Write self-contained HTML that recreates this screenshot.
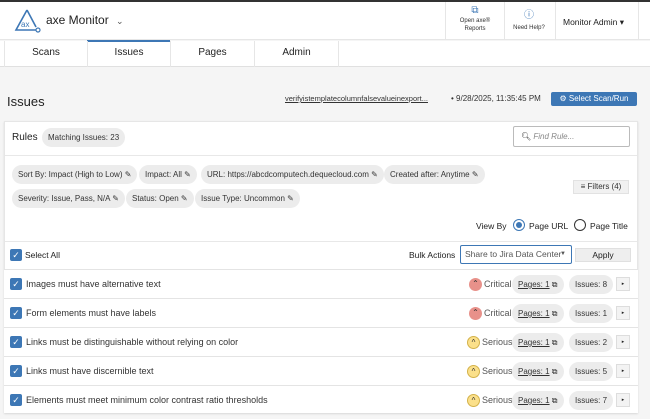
<!DOCTYPE html>
<html><head><style>
*{box-sizing:border-box;margin:0;padding:0}
body{width:650px;height:419px;overflow:hidden;background:#f5f5f5;font-family:"Liberation Sans",sans-serif;color:#222;position:relative;font-size:9px}
.a{position:absolute;white-space:nowrap}
.pill{position:absolute;background:#ececec;border-radius:12px;height:19px;line-height:19px;padding:0 6px;font-size:8px;color:#333;white-space:nowrap}
.row{position:absolute;left:4px;width:634px;height:29px;border-top:1px solid #e4e4e4;background:#fff}
.cb{position:absolute;left:6px;top:8px;width:12px;height:12px;background:#3d77b5;border-radius:2px;color:#fff;font-size:9px;line-height:12px;text-align:center}
.rt{position:absolute;left:22px;top:9px;font-size:9px;color:#333;white-space:nowrap}
.ic{position:absolute;width:13px;height:13px;border-radius:50%;top:8px;font-size:8px;line-height:12px;text-align:center;color:#333}
.sev{position:absolute;top:9px;font-size:9px;color:#555}
.btn{position:absolute;right:8px;top:7px;width:14px;height:14px;border:1px solid #ddd;background:#f3f3f3;font-size:5px;line-height:12px;text-align:center}
</style></head><body>
<div class="a" style="left:0;top:0;width:650px;height:2px;background:#333"></div>
<div class="a" style="left:0;top:2px;width:650px;height:38px;background:#fff;border-bottom:1px solid #e6e6e6"></div>
<svg class="a" style="left:14px;top:8px" width="28" height="26" viewBox="0 0 28 26"><path d="M13 2 L2 22 H23" fill="none" stroke="#3d77b5" stroke-width="1.6"/><path d="M13 2 L22 19" fill="none" stroke="#3d77b5" stroke-width="1.6"/><circle cx="24" cy="22" r="2" fill="#fff" stroke="#3d77b5" stroke-width="1.2"/><text x="7" y="19" font-size="8" fill="#3d77b5" font-family="Liberation Sans">ax</text></svg>
<div class="a" style="left:46px;top:13px;font-size:12px;color:#222">axe Monitor <span style="font-size:9px;color:#555;margin-left:4px">⌄</span></div>
<div class="a" style="left:445px;top:2px;width:1px;height:38px;background:#e6e6e6"></div>
<div class="a" style="left:504px;top:2px;width:1px;height:38px;background:#e6e6e6"></div>
<div class="a" style="left:555px;top:2px;width:1px;height:38px;background:#e6e6e6"></div>
<div class="a" style="left:638px;top:2px;width:1px;height:38px;background:#e6e6e6"></div>
<div class="a" style="left:450px;top:7px;width:50px;text-align:center;font-size:6px;line-height:8.5px;color:#333"><span style="color:#3d77b5;font-size:10px">⧉</span><br>Open axe®<br>Reports</div>
<div class="a" style="left:506px;top:10px;width:46px;text-align:center;font-size:6px;line-height:11px;color:#333"><span style="color:#3d77b5;font-size:10px">ⓘ</span><br>Need Help?</div>
<div class="a" style="left:563px;top:17px;font-size:8.5px;color:#222">Monitor Admin ▾</div>
<div class="a" style="left:0;top:41px;width:650px;height:26px;background:#fff;border-bottom:1px solid #e0e0e0"></div>
<div class="a" style="left:4px;top:41px;width:1px;height:26px;background:#e6e6e6"></div>
<div class="a" style="left:87px;top:40px;width:83px;height:2px;background:#3d77b5"></div>
<div class="a" style="left:87px;top:41px;width:1px;height:26px;background:#e6e6e6"></div>
<div class="a" style="left:170px;top:41px;width:1px;height:26px;background:#e6e6e6"></div>
<div class="a" style="left:254px;top:41px;width:1px;height:26px;background:#e6e6e6"></div>
<div class="a" style="left:338px;top:41px;width:1px;height:26px;background:#e6e6e6"></div>
<div class="a" style="left:5px;top:47px;width:82px;text-align:center;font-size:10px">Scans</div>
<div class="a" style="left:88px;top:47px;width:82px;text-align:center;font-size:10px">Issues</div>
<div class="a" style="left:171px;top:47px;width:83px;text-align:center;font-size:10px">Pages</div>
<div class="a" style="left:255px;top:47px;width:83px;text-align:center;font-size:10px">Admin</div>
<div class="a" style="left:7px;top:94px;font-size:13px;color:#222">Issues</div>
<div class="a" style="left:285px;top:94px;font-size:7.5px;color:#333;text-decoration:underline">verifyistemplatecolumnfalsevalueinexport...</div>
<div class="a" style="left:451px;top:94px;font-size:8px;color:#333">• 9/28/2025, 11:35:45 PM</div>
<div class="a" style="left:551px;top:92px;width:86px;height:14px;background:#3d77b5;border-radius:2px;color:#fff;font-size:8px;line-height:14px;text-align:center">⚙ Select Scan/Run</div>
<div class="a" style="left:4px;top:121px;width:634px;height:292px;background:#fff;border:1px solid #e6e6e6;box-shadow:0 1px 2px rgba(0,0,0,.12)"></div>
<div class="a" style="left:12px;top:132px;font-size:10px">Rules</div>
<div class="pill" style="left:42px;top:128px">Matching Issues: 23</div>
<div class="a" style="left:513px;top:126px;width:117px;height:21px;border:1px solid #bbb;border-radius:2px;font-size:8px;color:#888;line-height:19px;padding-left:7px"><span style="color:#333">🔍︎</span> <i>Find Rule...</i></div>
<div class="a" style="left:5px;top:155px;width:632px;height:1px;background:#e8e8e8"></div>
<div class="pill" style="left:12px;top:165px">Sort By: Impact (High to Low) ✎</div>
<div class="pill" style="left:139px;top:165px">Impact: All ✎</div>
<div class="pill" style="left:201px;top:165px">URL: https://abcdcomputech.dequecloud.com ✎</div>
<div class="pill" style="left:384px;top:165px">Created after: Anytime ✎</div>
<div class="pill" style="left:12px;top:189px">Severity: Issue, Pass, N/A ✎</div>
<div class="pill" style="left:126px;top:189px">Status: Open ✎</div>
<div class="pill" style="left:195px;top:189px">Issue Type: Uncommon ✎</div>
<div class="a" style="left:573px;top:180px;width:56px;height:14px;background:#f1f1f1;border:1px solid #e2e2e2;font-size:8px;line-height:12px;text-align:center;color:#333">≡ Filters (4)</div>
<div class="a" style="left:476px;top:221px;font-size:8.5px">View By</div>
<div class="a" style="left:513px;top:219px;width:12px;height:12px;border:1px solid #3d77b5;border-radius:50%"><div style="margin:2px;width:6px;height:6px;border-radius:50%;background:#3d77b5"></div></div>
<div class="a" style="left:529px;top:221px;font-size:8.5px">Page URL</div>
<div class="a" style="left:574px;top:219px;width:12px;height:12px;border:1px solid #333;border-radius:50%"></div>
<div class="a" style="left:590px;top:221px;font-size:8.5px">Page Title</div>
<div class="a" style="left:5px;top:241px;width:632px;height:1px;background:#e8e8e8"></div>
<div class="cb" style="top:249px;left:10px">✓</div>
<div class="a" style="left:25px;top:250px;font-size:8.5px">Select All</div>
<div class="a" style="left:409px;top:250px;font-size:8.5px">Bulk Actions</div>
<div class="a" style="left:460px;top:245px;width:112px;height:19px;border:1px solid #3d77b5;border-radius:2px;font-size:8.5px;line-height:17px;padding-left:4px;color:#555;overflow:hidden">Share to Jira Data Center<span style="position:absolute;right:5px;font-size:6px">▼</span></div>
<div class="a" style="left:575px;top:248px;width:56px;height:14px;background:#eee;border:1px solid #e0e0e0;font-size:8.5px;line-height:12px;text-align:center">Apply</div>

<div class="row" style="top:269px"><div class="cb">✓</div><div class="rt">Images must have alternative text</div><div class="ic" style="left:465px;background:#e8918a">⌃</div><div class="sev" style="left:480px">Critical</div><div class="pill" style="left:508px;top:5px;color:#333"><u>Pages: 1</u> ⧉</div><div class="pill" style="left:565px;top:5px">Issues: 8</div><div class="btn">▸</div></div>
<div class="row" style="top:298px"><div class="cb">✓</div><div class="rt">Form elements must have labels</div><div class="ic" style="left:465px;background:#e8918a">⌃</div><div class="sev" style="left:480px">Critical</div><div class="pill" style="left:508px;top:5px"><u>Pages: 1</u> ⧉</div><div class="pill" style="left:565px;top:5px">Issues: 1</div><div class="btn">▸</div></div>
<div class="row" style="top:327px"><div class="cb">✓</div><div class="rt">Links must be distinguishable without relying on color</div><div class="ic" style="left:463px;background:#fbe08a;border:1px solid #d4b24a">^</div><div class="sev" style="left:478px">Serious</div><div class="pill" style="left:508px;top:5px"><u>Pages: 1</u> ⧉</div><div class="pill" style="left:565px;top:5px">Issues: 2</div><div class="btn">▸</div></div>
<div class="row" style="top:356px"><div class="cb">✓</div><div class="rt">Links must have discernible text</div><div class="ic" style="left:463px;background:#fbe08a;border:1px solid #d4b24a">^</div><div class="sev" style="left:478px">Serious</div><div class="pill" style="left:508px;top:5px"><u>Pages: 1</u> ⧉</div><div class="pill" style="left:565px;top:5px">Issues: 5</div><div class="btn">▸</div></div>
<div class="row" style="top:385px;height:28px"><div class="cb">✓</div><div class="rt">Elements must meet minimum color contrast ratio thresholds</div><div class="ic" style="left:463px;background:#fbe08a;border:1px solid #d4b24a">^</div><div class="sev" style="left:478px">Serious</div><div class="pill" style="left:508px;top:5px"><u>Pages: 1</u> ⧉</div><div class="pill" style="left:565px;top:5px">Issues: 7</div><div class="btn">▸</div></div>
</body></html>
